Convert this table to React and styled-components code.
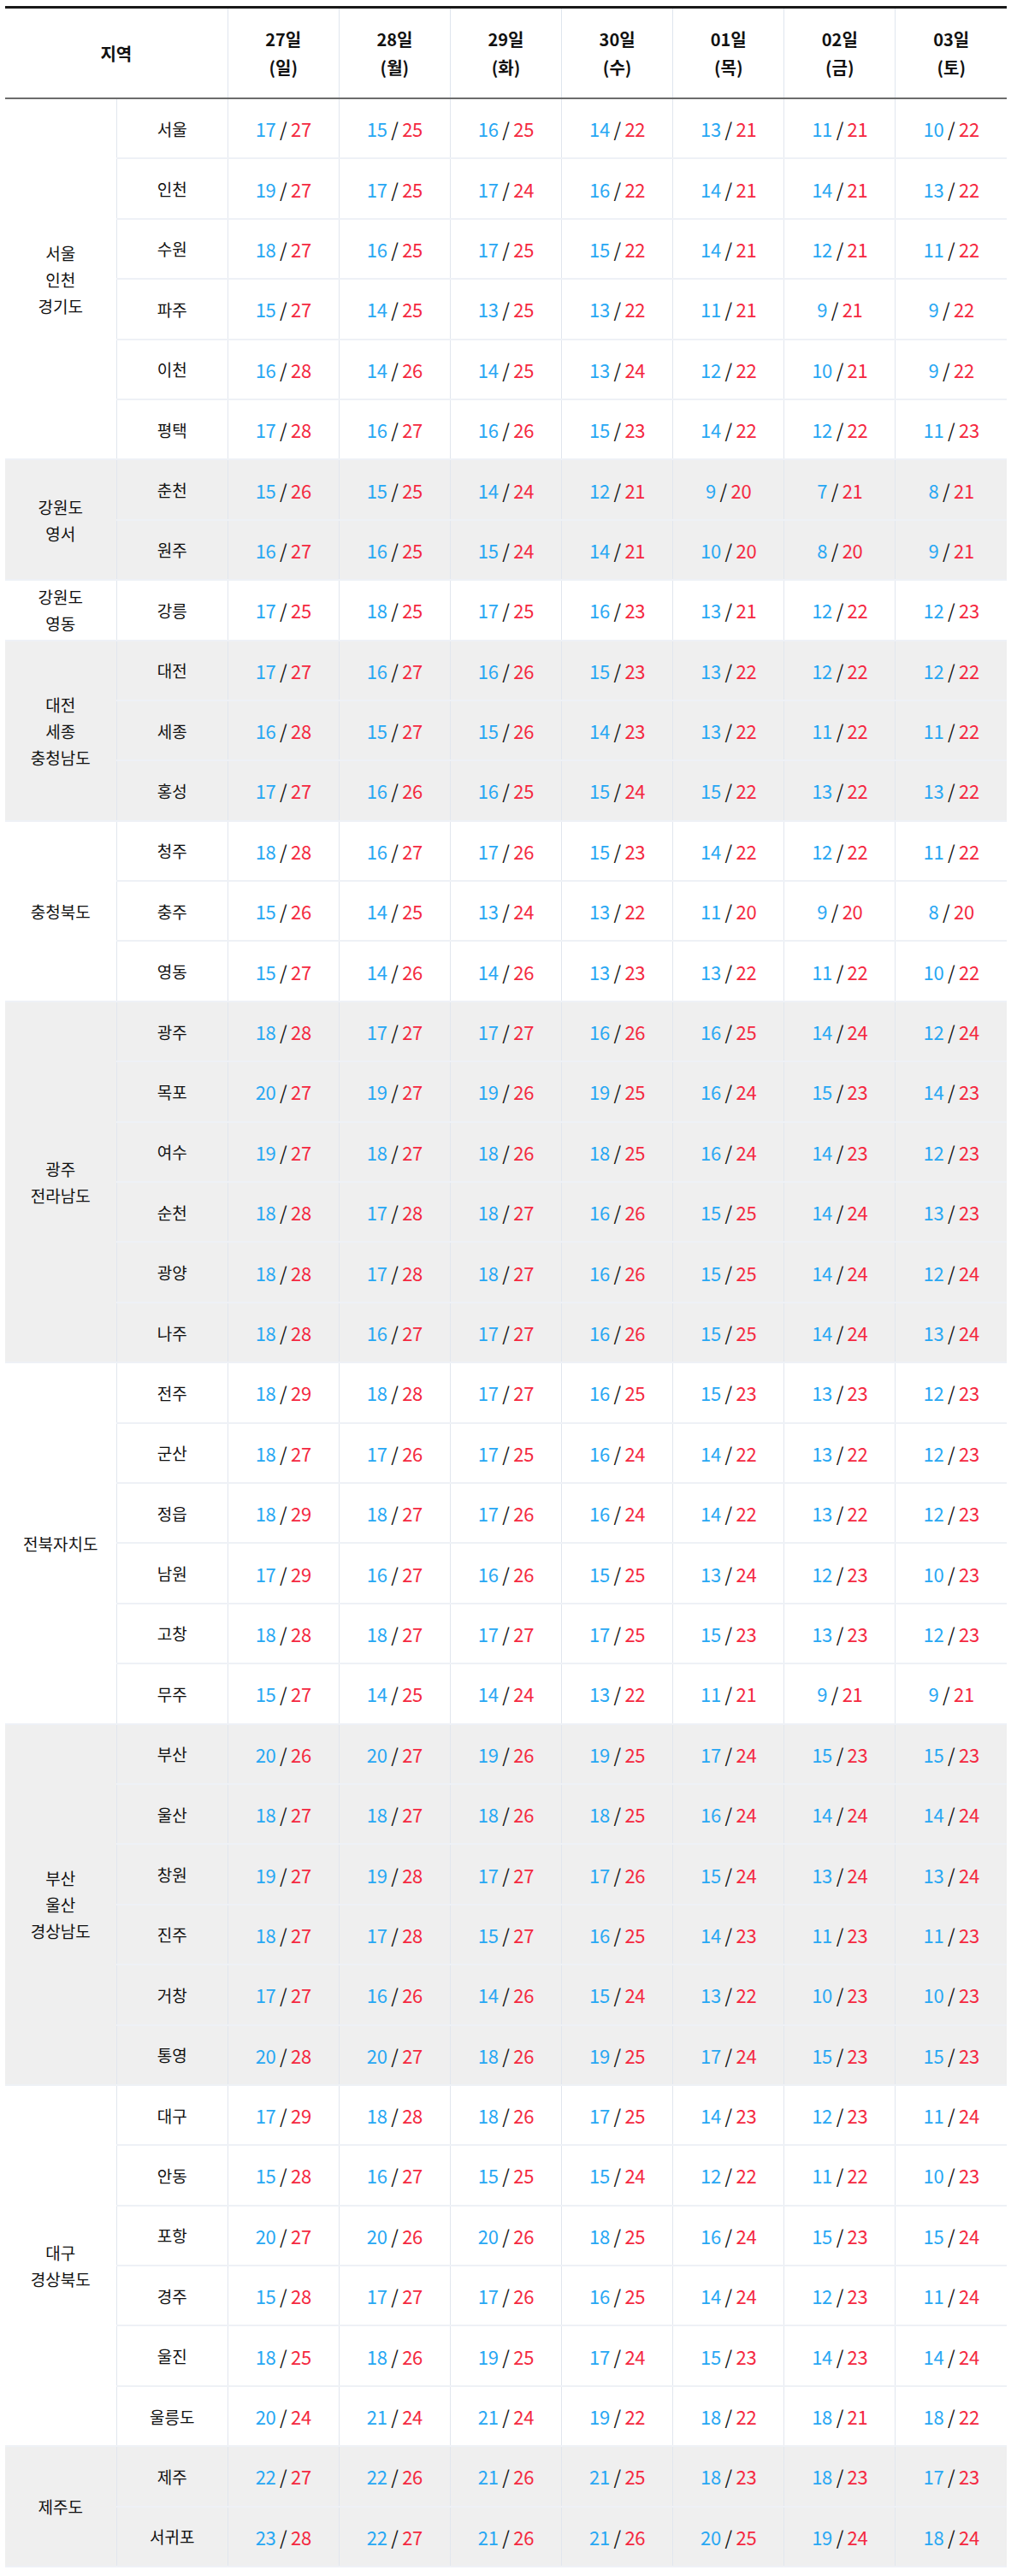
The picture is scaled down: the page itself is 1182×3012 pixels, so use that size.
import React from 'react'
import styled, { createGlobalStyle } from 'styled-components'

const GlobalStyle = createGlobalStyle`
  html, body {
    margin: 0;
    padding: 0;
    background: #fff;
  }
  body {
    font-family: "Noto Sans CJK KR", "Noto Sans", sans-serif;
    color: #111;
  }
`

const Page = styled.div`
  padding: 7px 5px 10px 6px;
`

const Table = styled.table`
  width: 1171px;
  border-collapse: collapse;
  table-layout: fixed;
  border-top: 3px solid #1a1a1a;
`

const HeadCell = styled.th`
  height: 104px;
  padding: 0;
  font-size: 20px;
  font-weight: 700;
  line-height: 33px;
  text-align: center;
  color: #111;
  border-bottom: 2px solid #6c6c6c;
  border-left: 1px solid #dfe5ee;
  &:first-child {
    border-left: none;
  }
`

const Group = styled.tbody`
  background: ${p => (p.$gray ? '#efefef' : '#fff')};
`

const Cell = styled.td`
  height: 68.4px;
  padding: 0;
  text-align: center;
  vertical-align: middle;
  border-left: 1px solid #e1e6ee;
  border-bottom: 2px solid #eef1f6;
`

const AreaCell = styled(Cell)`
  border-left: none;
  font-size: 19px;
  line-height: 31px;
`

const CityCell = styled(Cell)`
  font-size: 19px;
`

const Temp = styled.span`
  font-size: 22px;
  letter-spacing: -0.3px;
`

const Low = styled.span`
  color: #27a7f3;
`

const High = styled.span`
  color: #f42840;
`

const days = [
  ['27일', '(일)'],
  ['28일', '(월)'],
  ['29일', '(화)'],
  ['30일', '(수)'],
  ['01일', '(목)'],
  ['02일', '(금)'],
  ['03일', '(토)'],
]

const groups = [
  {
    area: ['서울', '인천', '경기도'],
    rows: [
      ['서울', '17/27 15/25 16/25 14/22 13/21 11/21 10/22'],
      ['인천', '19/27 17/25 17/24 16/22 14/21 14/21 13/22'],
      ['수원', '18/27 16/25 17/25 15/22 14/21 12/21 11/22'],
      ['파주', '15/27 14/25 13/25 13/22 11/21 9/21 9/22'],
      ['이천', '16/28 14/26 14/25 13/24 12/22 10/21 9/22'],
      ['평택', '17/28 16/27 16/26 15/23 14/22 12/22 11/23'],
    ],
  },
  {
    area: ['강원도', '영서'],
    rows: [
      ['춘천', '15/26 15/25 14/24 12/21 9/20 7/21 8/21'],
      ['원주', '16/27 16/25 15/24 14/21 10/20 8/20 9/21'],
    ],
  },
  {
    area: ['강원도', '영동'],
    rows: [['강릉', '17/25 18/25 17/25 16/23 13/21 12/22 12/23']],
  },
  {
    area: ['대전', '세종', '충청남도'],
    rows: [
      ['대전', '17/27 16/27 16/26 15/23 13/22 12/22 12/22'],
      ['세종', '16/28 15/27 15/26 14/23 13/22 11/22 11/22'],
      ['홍성', '17/27 16/26 16/25 15/24 15/22 13/22 13/22'],
    ],
  },
  {
    area: ['충청북도'],
    rows: [
      ['청주', '18/28 16/27 17/26 15/23 14/22 12/22 11/22'],
      ['충주', '15/26 14/25 13/24 13/22 11/20 9/20 8/20'],
      ['영동', '15/27 14/26 14/26 13/23 13/22 11/22 10/22'],
    ],
  },
  {
    area: ['광주', '전라남도'],
    rows: [
      ['광주', '18/28 17/27 17/27 16/26 16/25 14/24 12/24'],
      ['목포', '20/27 19/27 19/26 19/25 16/24 15/23 14/23'],
      ['여수', '19/27 18/27 18/26 18/25 16/24 14/23 12/23'],
      ['순천', '18/28 17/28 18/27 16/26 15/25 14/24 13/23'],
      ['광양', '18/28 17/28 18/27 16/26 15/25 14/24 12/24'],
      ['나주', '18/28 16/27 17/27 16/26 15/25 14/24 13/24'],
    ],
  },
  {
    area: ['전북자치도'],
    rows: [
      ['전주', '18/29 18/28 17/27 16/25 15/23 13/23 12/23'],
      ['군산', '18/27 17/26 17/25 16/24 14/22 13/22 12/23'],
      ['정읍', '18/29 18/27 17/26 16/24 14/22 13/22 12/23'],
      ['남원', '17/29 16/27 16/26 15/25 13/24 12/23 10/23'],
      ['고창', '18/28 18/27 17/27 17/25 15/23 13/23 12/23'],
      ['무주', '15/27 14/25 14/24 13/22 11/21 9/21 9/21'],
    ],
  },
  {
    area: ['부산', '울산', '경상남도'],
    rows: [
      ['부산', '20/26 20/27 19/26 19/25 17/24 15/23 15/23'],
      ['울산', '18/27 18/27 18/26 18/25 16/24 14/24 14/24'],
      ['창원', '19/27 19/28 17/27 17/26 15/24 13/24 13/24'],
      ['진주', '18/27 17/28 15/27 16/25 14/23 11/23 11/23'],
      ['거창', '17/27 16/26 14/26 15/24 13/22 10/23 10/23'],
      ['통영', '20/28 20/27 18/26 19/25 17/24 15/23 15/23'],
    ],
  },
  {
    area: ['대구', '경상북도'],
    rows: [
      ['대구', '17/29 18/28 18/26 17/25 14/23 12/23 11/24'],
      ['안동', '15/28 16/27 15/25 15/24 12/22 11/22 10/23'],
      ['포항', '20/27 20/26 20/26 18/25 16/24 15/23 15/24'],
      ['경주', '15/28 17/27 17/26 16/25 14/24 12/23 11/24'],
      ['울진', '18/25 18/26 19/25 17/24 15/23 14/23 14/24'],
      ['울릉도', '20/24 21/24 21/24 19/22 18/22 18/21 18/22'],
    ],
  },
  {
    area: ['제주도'],
    rows: [
      ['제주', '22/27 22/26 21/26 21/25 18/23 18/23 17/23'],
      ['서귀포', '23/28 22/27 21/26 21/26 20/25 19/24 18/24'],
    ],
  },
]

function TempCell({ value }) {
  const [low, high] = value.split('/')
  return (
    <Cell>
      <Temp>
        <Low>{low}</Low> / <High>{high}</High>
      </Temp>
    </Cell>
  )
}

function RegionGroup({ group, gray }) {
  return (
    <Group $gray={gray}>
      {group.rows.map(([city, temps], i) => (
        <tr key={city}>
          {i === 0 && (
            <AreaCell rowSpan={group.rows.length}>
              {group.area.map((line, j) => (
                <React.Fragment key={j}>
                  {j > 0 && <br />}
                  {line}
                </React.Fragment>
              ))}
            </AreaCell>
          )}
          <CityCell>{city}</CityCell>
          {temps.split(' ').map((t, k) => (
            <TempCell key={k} value={t} />
          ))}
        </tr>
      ))}
    </Group>
  )
}

export default function App() {
  return (
    <Page>
      <GlobalStyle />
      <Table>
        <thead>
          <tr>
            <HeadCell colSpan={2}>지역</HeadCell>
            {days.map(([d, w]) => (
              <HeadCell key={d}>
                {d}
                <br />
                {w}
              </HeadCell>
            ))}
          </tr>
        </thead>
        {groups.map((g, i) => (
          <RegionGroup key={i} group={g} gray={i % 2 === 1} />
        ))}
      </Table>
    </Page>
  )
}
